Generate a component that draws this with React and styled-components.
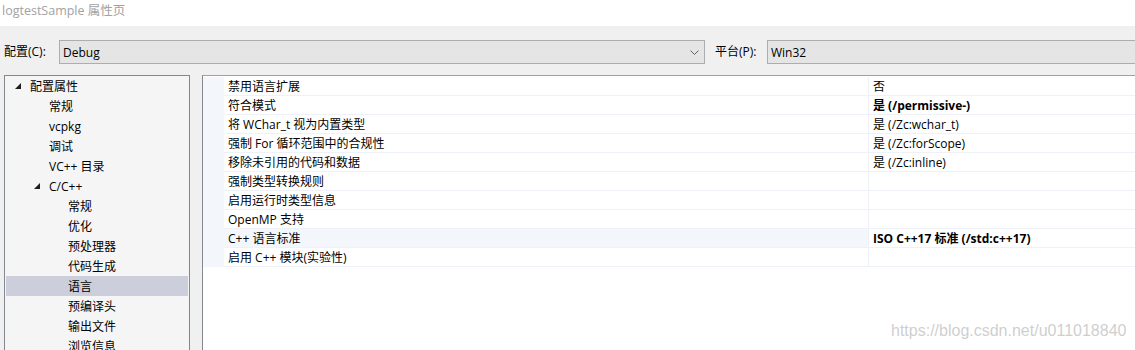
import React from 'react';
import styled, {createGlobalStyle} from 'styled-components';

const GlobalStyle = createGlobalStyle`
    body {
        margin: 0;
        font-family: "Open Sans", "Noto Sans CJK SC", sans-serif;
        font-size: 12px;
        color: #000;
    }
`;

const Window = styled.div`
    position: relative;
    width: 1135px;
    height: 350px;
    overflow: hidden;
    background: #f0f0f0;
`;

const TitleBar = styled.div`
    height: 26px;
    background: #fff;
    color: #a2a2a2;
    padding: 3px 0 0 2px;
    box-sizing: border-box;
    line-height: 15px;
    font-size: 12.5px;
`;

const ConfigRow = styled.div`
    display: flex;
    align-items: center;
    padding: 14px 0 0 4px;
    height: 24px;
`;

const Label = styled.span`
    width: ${p => p.width}px;
    flex-shrink: 0;
    line-height: 24px;
`;

const Combo = styled.div`
    display: flex;
    align-items: center;
    justify-content: space-between;
    box-sizing: border-box;
    width: ${p => p.width}px;
    height: 24px;
    flex-shrink: 0;
    border: 1px solid #adadad;
    background: #e5e5e5;
    padding: 0 5px 0 3px;
    margin-right: ${p => p.gap || 0}px;
`;

const Body = styled.div`
    display: flex;
    margin-top: 11px;
    gap: 12px;
    padding-left: 4px;
`;

const TreePanel = styled.div`
    width: 186px;
    height: 300px;
    flex-shrink: 0;
    box-sizing: border-box;
    border: 1px solid #828790;
    background: #f5f5f5;
    padding: 0 1px;
`;

const TreeRow = styled.div`
    display: flex;
    align-items: center;
    height: 20px;
    padding-left: ${p => p.level * 19 + 24}px;
    background: ${p => (p.selected ? '#cccedb' : 'transparent')};
    white-space: nowrap;
`;

const Arrow = styled.span`
    width: 15px;
    margin-left: -15px;
    display: flex;
    align-items: center;
`;

const GridPanel = styled.div`
    flex: 1;
    height: 300px;
    box-sizing: border-box;
    border-top: 1px solid #a0a0a0;
    border-left: 1px solid #828790;
    background: #fff;
    margin-right: -10px;
    padding-top: 1px;
`;

const GridRow = styled.div`
    display: grid;
    grid-template-columns: 21px 645px 1fr;
    height: 19px;
`;

const Gutter = styled.div`
    background: #f3f6fb;
`;

const Cell = styled.div`
    display: flex;
    align-items: center;
    padding-left: 4px;
    border-bottom: 1px solid #eef2f8;
    border-right: ${p => (p.divider ? '1px solid #eef2f8' : 'none')};
    background: ${p => (p.selected ? '#f3f6fb' : '#fff')};
    font-weight: ${p => (p.bold ? 700 : 400)};
    white-space: nowrap;
    box-sizing: border-box;
`;

const Watermark = styled.div`
    position: absolute;
    left: 891px;
    top: 322px;
    font-family: "Liberation Sans", Arial, sans-serif;
    font-size: 16px;
    color: rgba(190, 190, 190, 0.75);
    white-space: nowrap;
`;

const treeItems = [
    {label: '配置属性', level: 0, open: true},
    {label: '常规', level: 1},
    {label: 'vcpkg', level: 1},
    {label: '调试', level: 1},
    {label: 'VC++ 目录', level: 1},
    {label: 'C/C++', level: 1, open: true},
    {label: '常规', level: 2},
    {label: '优化', level: 2},
    {label: '预处理器', level: 2},
    {label: '代码生成', level: 2},
    {label: '语言', level: 2, selected: true},
    {label: '预编译头', level: 2},
    {label: '输出文件', level: 2},
    {label: '浏览信息', level: 2},
];

const props = [
    {name: '禁用语言扩展', value: '否'},
    {name: '符合模式', value: '是 (/permissive-)', bold: true},
    {name: '将 WChar_t 视为内置类型', value: '是 (/Zc:wchar_t)'},
    {name: '强制 For 循环范围中的合规性', value: '是 (/Zc:forScope)'},
    {name: '移除未引用的代码和数据', value: '是 (/Zc:inline)'},
    {name: '强制类型转换规则', value: ''},
    {name: '启用运行时类型信息', value: ''},
    {name: 'OpenMP 支持', value: ''},
    {name: 'C++ 语言标准', value: 'ISO C++17 标准 (/std:c++17)', bold: true, selected: true},
    {name: '启用 C++ 模块(实验性)', value: ''},
];

function Expander() {
    return (
        <svg width="6" height="6" viewBox="0 0 6 6">
            <polygon points="6,0 6,6 0,6" fill="#1e1e1e" />
        </svg>
    );
}

function Chevron() {
    return (
        <svg width="9" height="5" viewBox="0 0 9 5">
            <polyline points="0.5,0.5 4.5,4.5 8.5,0.5" fill="none" stroke="#606060" strokeWidth="1" />
        </svg>
    );
}

export default function App() {
    return (
        <Window>
            <GlobalStyle />
            <TitleBar>logtestSample 属性页</TitleBar>
            <ConfigRow>
                <Label width={55}>配置(C):</Label>
                <Combo width={646} gap={10}>
                    <span>Debug</span>
                    <Chevron />
                </Combo>
                <Label width={52}>平台(P):</Label>
                <Combo width={400}>
                    <span>Win32</span>
                </Combo>
            </ConfigRow>
            <Body>
                <TreePanel>
                    {treeItems.map((item, i) => (
                        <TreeRow key={i} level={item.level} selected={item.selected}>
                            {item.open && <Arrow><Expander /></Arrow>}
                            {item.label}
                        </TreeRow>
                    ))}
                </TreePanel>
                <GridPanel>
                    {props.map((p, i) => (
                        <GridRow key={i}>
                            <Gutter />
                            <Cell divider selected={p.selected}>{p.name}</Cell>
                            <Cell bold={p.bold}>{p.value}</Cell>
                        </GridRow>
                    ))}
                </GridPanel>
            </Body>
            <Watermark>https://blog.csdn.net/u011018840</Watermark>
        </Window>
    );
}
